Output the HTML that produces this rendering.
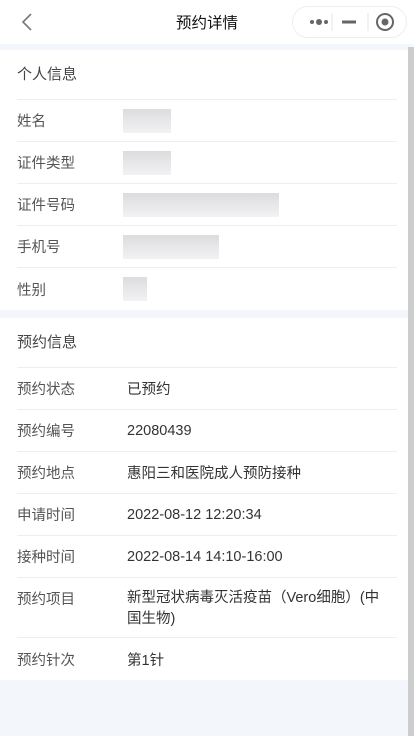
<!DOCTYPE html>
<html><head><meta charset="utf-8"><style>
*{margin:0;padding:0;box-sizing:border-box}
body{width:414px;height:736px;background:#f3f6fa;font-family:"Liberation Sans","Noto Sans CJK SC",sans-serif;position:relative;overflow:hidden}
.hdr{height:44px;background:#fff;position:relative}
.hdr .t{position:absolute;left:0;right:0;top:11px;text-align:center;font-size:15.5px;color:#111}
.cap{position:absolute;left:292px;top:6px;width:115px;height:32px;border:1px solid #eee;border-radius:16px;background:#fff}
.sb{position:absolute;left:408px;top:47px;width:6px;height:689px;background:#cdcdcd}
.sec{background:#fff;width:408px;padding:0 11px 0 17px}
.ti{height:50px;line-height:50px;font-size:15px;color:#444;border-bottom:1px solid #eceef0}
.r{display:flex;min-height:42px;border-bottom:1px solid #eceef0;font-size:14.5px;align-items:center}
.r:last-child{border-bottom:none}
.l{width:110px;color:#555}
.v{color:#333;flex:none;width:262px}
.blur{height:24px;margin-left:-4px;background:linear-gradient(#dcdcde,#f2f2f4)}
</style></head><body>
<div class="hdr"><svg style="position:absolute;left:20px;top:12px" width="14" height="20"><path d="M11 2L3 10L11 18" stroke="#777" stroke-width="1.6" fill="none"/></svg>
<div class="t">预约详情</div>
<div class="cap"><svg width="115" height="32" style="position:absolute;left:-1px;top:-1px">
<circle cx="20" cy="16" r="2" fill="#666"/><circle cx="27" cy="16" r="3" fill="#666"/><circle cx="34" cy="16" r="2" fill="#666"/>
<line x1="40" y1="7" x2="40" y2="25" stroke="#e5e5e5"/><rect x="50" y="14.5" width="14" height="3" fill="#666"/>
<line x1="76" y1="7" x2="76" y2="25" stroke="#e5e5e5"/><circle cx="93" cy="16" r="8" stroke="#666" stroke-width="2" fill="none"/><circle cx="93" cy="16" r="3.5" fill="#666"/></svg></div></div>
<div style="height:6px"></div>
<div class="sec">
<div class="ti">个人信息</div>
<div class="r"><span class="l">姓名</span><div class="blur" style="width:48px"></div></div>
<div class="r"><span class="l">证件类型</span><div class="blur" style="width:48px"></div></div>
<div class="r"><span class="l">证件号码</span><div class="blur" style="width:156px"></div></div>
<div class="r"><span class="l">手机号</span><div class="blur" style="width:96px"></div></div>
<div class="r"><span class="l">性别</span><div class="blur" style="width:24px"></div></div>
</div>
<div style="height:8px"></div>
<div class="sec">
<div class="ti">预约信息</div>
<div class="r"><span class="l">预约状态</span><span class="v">已预约</span></div>
<div class="r"><span class="l">预约编号</span><span class="v">22080439</span></div>
<div class="r"><span class="l">预约地点</span><span class="v">惠阳三和医院成人预防接种</span></div>
<div class="r"><span class="l">申请时间</span><span class="v">2022-08-12 12:20:34</span></div>
<div class="r"><span class="l">接种时间</span><span class="v">2022-08-14 14:10-16:00</span></div>
<div class="r" style="min-height:60px;align-items:flex-start;padding-top:10px"><span class="l">预约项目</span><span class="v" style="line-height:21px">新型冠状病毒灭活疫苗（Vero细胞）(中<br>国生物)</span></div>
<div class="r"><span class="l">预约针次</span><span class="v">第1针</span></div>
</div>
<div class="sb"></div>
</body></html>
